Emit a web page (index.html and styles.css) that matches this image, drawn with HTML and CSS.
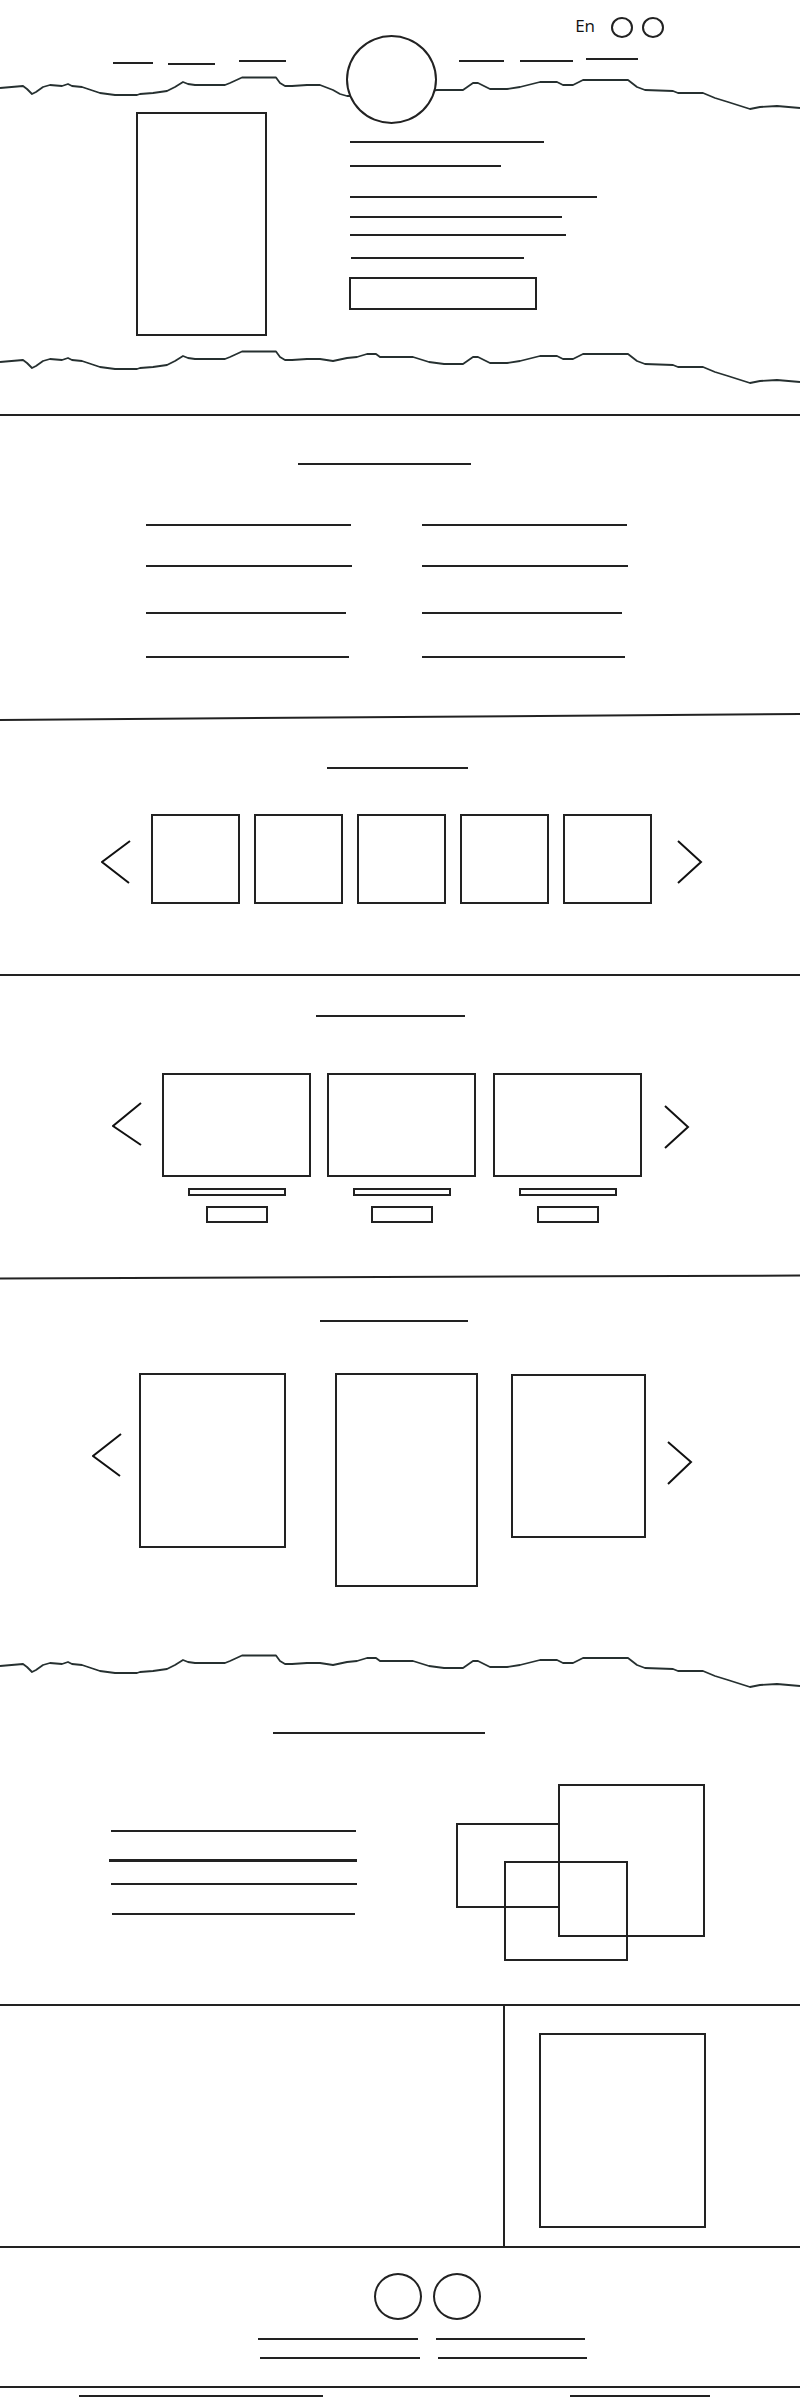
FILE: index.html
```html
<!DOCTYPE html>
<html lang="en">
<head>
  <meta charset="UTF-8" />
  <meta name="viewport" content="width=device-width, initial-scale=1.0"/>
  <title>Wireframe</title>
  <link rel="stylesheet" href="styles.css">
</head>
<body>

  <!-- HEADER + HERO -->
  <header class="head">
    <div class="topbar">
      <span class="lang">En</span>
      <span class="dot"></span>
      <span class="dot"></span>
    </div>

    <nav class="nav">
      <div class="nav-group nav-left">
        <span class="line n1"></span>
        <span class="line n2"></span>
        <span class="line n3"></span>
      </div>
      <div class="logo"></div>
      <div class="nav-group nav-right">
        <span class="line n4"></span>
        <span class="line n5"></span>
        <span class="line n6"></span>
      </div>
    </nav>

    <svg class="wave" viewBox="0 0 800 36">
      <path d="M0 12 L23 10 L27 13 L32 18 L36 16 L43 11 L50 9 L62 10 L68 8 L72 10 L82 11 L100 17 L115 19 L137 19 L140 18 L153 17 L167 15 L175 11 L183 6 L188 8 L195 9 L225 9 L230 7 L242 1.5 L276 1.5 L280 7 L285 10 L292 10 L307 9 L320 9 L333 14 L340 18 L347 20 L391 20 L437 14 L448 14 L463 14 L473 7 L478 7 L490 13 L507 13 L520 11 L540 6 L557 6 L563 9 L573 9 L583 4 L628 4 L637 11 L645 14 L673 15 L678 17 L703 17 L715 22 L728 26 L750 33 L760 31 L777 30 L800 32"/>
    </svg>

    <div class="hero">
      <div class="box hero-img"></div>
      <div class="hero-text">
        <span class="line h1"></span>
        <span class="line h2"></span>
        <span class="line h3"></span>
        <span class="line h4"></span>
        <span class="line h5"></span>
        <span class="line h6"></span>
        <div class="box hero-btn"></div>
      </div>
    </div>

    <svg class="wave wave-low" viewBox="0 0 800 36">
      <path d="M0 12 L23 10 L27 13 L32 18 L36 16 L43 11 L50 9 L62 10 L68 8 L72 10 L82 11 L100 17 L115 19 L137 19 L140 18 L153 17 L167 15 L175 11 L183 6 L188 8 L195 9 L225 9 L230 7 L242 1.5 L276 1.5 L280 7 L285 10 L292 10 L307 9 L320 9 L333 11 L347 8 L357 7 L367 4 L376 4 L380 7 L413 7 L429 12 L444 14 L463 14 L473 7 L478 7 L490 13 L507 13 L520 11 L540 6 L557 6 L563 9 L573 9 L583 4 L628 4 L637 11 L645 14 L673 15 L678 17 L703 17 L715 22 L728 26 L750 33 L760 31 L777 30 L800 32"/>
    </svg>
  </header>

  <!-- DEUX COLONNES -->
  <section class="features">
    <span class="line title t-features"></span>
    <div class="cols">
      <div class="col">
        <span class="line c1"></span>
        <span class="line c2"></span>
        <span class="line c3"></span>
        <span class="line c4"></span>
      </div>
      <div class="col">
        <span class="line c1"></span>
        <span class="line c2"></span>
        <span class="line c3"></span>
        <span class="line c4"></span>
      </div>
    </div>
  </section>

  <svg class="slant" viewBox="0 0 800 8" preserveAspectRatio="none">
    <line x1="0" y1="7" x2="800" y2="1"/>
  </svg>

  <!-- CARROUSEL PETITS -->
  <section class="strip">
    <span class="line title t-strip"></span>
    <div class="carousel small-row">
      <svg class="chev chev-left" viewBox="0 0 30 44"><polyline points="29,1 1,22 28,43"/></svg>
      <div class="thumbs">
        <div class="box thumb"></div>
        <div class="box thumb"></div>
        <div class="box thumb"></div>
        <div class="box thumb"></div>
        <div class="box thumb"></div>
      </div>
      <svg class="chev chev-right" viewBox="0 0 26 44"><polyline points="1,1 24,22 1,43"/></svg>
    </div>
  </section>

  <!-- CARTES -->
  <section class="cards">
    <span class="line title t-cards"></span>
    <div class="carousel card-row">
      <svg class="chev chev-left" viewBox="0 0 30 44"><polyline points="29,1 1,24 29,43"/></svg>
      <div class="card">
        <div class="box card-img"></div>
        <div class="box card-bar"></div>
        <div class="box card-btn"></div>
      </div>
      <div class="card">
        <div class="box card-img"></div>
        <div class="box card-bar"></div>
        <div class="box card-btn"></div>
      </div>
      <div class="card">
        <div class="box card-img"></div>
        <div class="box card-bar"></div>
        <div class="box card-btn"></div>
      </div>
      <svg class="chev chev-right" viewBox="0 0 26 44"><polyline points="1,1 24,22 1,43"/></svg>
    </div>
  </section>

  <svg class="slant slant-thin" viewBox="0 0 800 6" preserveAspectRatio="none">
    <line x1="0" y1="4.5" x2="800" y2="1.5"/>
  </svg>

  <!-- GALERIE -->
  <section class="gallery">
    <span class="line title t-gallery"></span>
    <div class="carousel tall-row">
      <svg class="chev chev-left" viewBox="0 0 30 44"><polyline points="29,1 1,23 28,43"/></svg>
      <div class="box tall tall-1"></div>
      <div class="box tall tall-2"></div>
      <div class="box tall tall-3"></div>
      <svg class="chev chev-right" viewBox="0 0 26 44"><polyline points="1,1 24,21 1,43"/></svg>
    </div>
  </section>

  <svg class="wave" viewBox="0 0 800 36">
    <path d="M0 12 L23 10 L27 13 L32 18 L36 16 L43 11 L50 9 L62 10 L68 8 L72 10 L82 11 L100 17 L115 19 L137 19 L140 18 L153 17 L167 15 L175 11 L183 6 L188 8 L195 9 L225 9 L230 7 L242 1.5 L276 1.5 L280 7 L285 10 L292 10 L307 9 L320 9 L333 11 L347 8 L357 7 L367 4 L376 4 L380 7 L413 7 L429 12 L444 14 L463 14 L473 7 L478 7 L490 13 L507 13 L520 11 L540 6 L557 6 L563 9 L573 9 L583 4 L628 4 L637 11 L645 14 L673 15 L678 17 L703 17 L715 22 L728 26 L750 33 L760 31 L777 30 L800 32"/>
  </svg>

  <!-- A PROPOS -->
  <section class="about">
    <span class="line title t-about"></span>
    <div class="about-body">
      <div class="about-text">
        <span class="line a1"></span>
        <span class="line a2"></span>
        <span class="line a3"></span>
        <span class="line a4"></span>
      </div>
      <div class="collage">
        <div class="box frame frame-big"></div>
        <div class="box frame frame-mid"></div>
        <div class="box frame frame-low"></div>
      </div>
    </div>
  </section>

  <!-- SPLIT -->
  <section class="split">
    <div class="split-left"></div>
    <div class="split-right">
      <div class="box split-img"></div>
    </div>
  </section>

  <!-- FOOTER -->
  <footer class="foot">
    <div class="socials">
      <span class="ring"></span>
      <span class="ring"></span>
    </div>
    <div class="foot-row">
      <span class="line f1"></span>
      <span class="line f2"></span>
    </div>
    <div class="foot-row foot-row-2">
      <span class="line f1"></span>
      <span class="line f2"></span>
    </div>
    <div class="legal">
      <span class="line l1"></span>
      <span class="line l2"></span>
    </div>
  </footer>

</body>
</html>
```

FILE: styles.css
```css
* {
  box-sizing: border-box;
}

body {
  margin: 0;
  width: 800px;
  background: #fff;
  color: #111;
  font-family: 'Open Sans', 'Liberation Sans', sans-serif;
}

.line {
  display: block;
  height: 2px;
  background: #222;
}

.box {
  border: 2px solid #222;
  background: transparent;
}

.title {
  margin-left: auto;
  margin-right: auto;
}

/* Haut de page */
.head {
  padding-top: 17px;
  padding-bottom: 28px;
  border-bottom: 2px solid #222;
}

.topbar {
  display: flex;
  justify-content: flex-end;
  align-items: flex-start;
  height: 18px;
  padding-right: 136px;
}

.lang {
  font-size: 17px;
  line-height: 17px;
  margin-right: 16px;
}

.dot {
  width: 22px;
  height: 21px;
  border: 2px solid #222;
  border-radius: 50%;
}

.dot + .dot {
  margin-left: 9px;
}

.nav {
  display: flex;
  align-items: flex-start;
  height: 41px;
}

.nav-group {
  display: flex;
  align-items: flex-start;
}

.nav-left {
  padding-left: 113px;
}

.n1 { width: 40px; margin-top: 27px; }
.n2 { width: 47px; margin-top: 28px; margin-left: 15px; }
.n3 { width: 47px; margin-top: 25px; margin-left: 24px; }
.n4 { width: 45px; margin-top: 25px; }
.n5 { width: 53px; margin-top: 25px; margin-left: 16px; }
.n6 { width: 52px; margin-top: 23px; margin-left: 13px; }

.logo {
  position: relative;
  z-index: 1;
  flex-shrink: 0;
  width: 91px;
  height: 89px;
  margin-left: 60px;
  border: 2px solid #222;
  border-radius: 50%;
  background: #fff;
}

.nav-right {
  margin-left: 22px;
}

.wave {
  display: block;
  width: 800px;
  height: 36px;
}

.wave path {
  fill: none;
  stroke: #263030;
  stroke-width: 1.8;
  stroke-linejoin: round;
}

.hero {
  display: flex;
  align-items: flex-start;
  padding-left: 136px;
  margin-bottom: 14px;
}

.hero-img {
  width: 131px;
  height: 224px;
}

.hero-text {
  margin-left: 83px;
  display: flex;
  flex-direction: column;
  align-items: flex-start;
}

.h1 { width: 194px; margin-top: 29px; }
.h2 { width: 151px; margin-top: 22px; }
.h3 { width: 247px; margin-top: 29px; }
.h4 { width: 212px; margin-top: 18px; }
.h5 { width: 216px; margin-top: 16px; }
.h6 { width: 173px; margin-top: 21px; margin-left: 1px; }

.hero-btn {
  width: 188px;
  height: 33px;
  margin-top: 18px;
  margin-left: -1px;
}

/* Deux colonnes */
.features {
  padding-top: 47px;
  padding-bottom: 55px;
}

.t-features {
  width: 173px;
  margin-left: 298px;
}

.cols {
  display: flex;
  gap: 70px;
  padding-left: 146px;
  margin-top: 59px;
}

.col {
  width: 206px;
}

.c1 { width: 205px; }
.c2 { width: 206px; margin-top: 39px; }
.c3 { width: 200px; margin-top: 45px; }
.c4 { width: 203px; margin-top: 42px; }

.slant {
  display: block;
  width: 800px;
  height: 8px;
}

.slant line {
  stroke: #222;
  stroke-width: 2;
}

.slant-thin {
  height: 6px;
}

/* Carrousels */
.carousel {
  display: flex;
  align-items: flex-start;
}

.chev {
  flex-shrink: 0;
  width: 30px;
  height: 44px;
}

.chev-right {
  width: 26px;
}

.chev polyline {
  fill: none;
  stroke: #111;
  stroke-width: 2;
}

.strip {
  padding-top: 46px;
  padding-bottom: 70px;
  border-bottom: 2px solid #222;
}

.t-strip {
  width: 141px;
  margin-left: 327px;
}

.small-row {
  margin-top: 45px;
  padding-left: 101px;
}

.small-row .chev {
  margin-top: 26px;
}

.thumbs {
  display: flex;
  gap: 14px;
  margin-left: 20px;
}

.thumb {
  width: 89px;
  height: 90px;
}

.small-row .chev-right {
  margin-left: 25px;
}

/* Cartes */
.cards {
  padding-top: 39px;
  padding-bottom: 51px;
}

.t-cards {
  width: 149px;
  margin-left: 316px;
}

.card-row {
  margin-top: 56px;
  padding-left: 112px;
}

.card-row .chev-left {
  margin-top: 29px;
  margin-right: 20px;
}

.card-row .chev-right {
  margin-top: 32px;
  margin-left: 22px;
}

.card {
  display: flex;
  flex-direction: column;
  align-items: center;
}

.card + .card {
  margin-left: 16px;
}

.card:nth-of-type(3) {
  margin-left: 17px;
}

.card-img {
  width: 149px;
  height: 104px;
}

.card-bar {
  width: 98px;
  height: 8px;
  margin-top: 11px;
}

.card-btn {
  width: 62px;
  height: 17px;
  margin-top: 10px;
}

/* Galerie */
.gallery {
  padding-top: 40px;
  padding-bottom: 67px;
}

.t-gallery {
  width: 148px;
  margin-left: 320px;
}

.tall-row {
  margin-top: 51px;
  padding-left: 92px;
}

.tall-row .chev-left {
  margin-top: 60px;
  margin-right: 17px;
}

.tall-row .chev-right {
  margin-top: 68px;
  margin-left: 21px;
}

.tall-1 { width: 147px; height: 175px; }
.tall-2 { width: 143px; height: 214px; margin-left: 49px; }
.tall-3 { width: 135px; height: 164px; margin-left: 33px; margin-top: 1px; }

/* A propos */
.about {
  padding-top: 42px;
  padding-bottom: 43px;
  border-bottom: 2px solid #222;
}

.t-about {
  width: 212px;
  margin-left: 273px;
}

.about-body {
  display: flex;
  align-items: flex-start;
  margin-top: 50px;
  padding-left: 109px;
}

.about-text {
  width: 248px;
  padding-top: 46px;
}

.a1 { width: 245px; margin-left: 2px; }
.a2 { width: 248px; height: 3px; margin-top: 27px; }
.a3 { width: 246px; margin-left: 2px; margin-top: 21px; }
.a4 { width: 243px; margin-left: 3px; margin-top: 28px; }

.collage {
  position: relative;
  width: 249px;
  height: 177px;
  margin-left: 99px;
}

.frame {
  position: absolute;
}

.frame-big { left: 102px; top: 0; width: 147px; height: 153px; }
.frame-mid { left: 0; top: 39px; width: 104px; height: 85px; }
.frame-low { left: 48px; top: 77px; width: 124px; height: 100px; }

/* Bloc partagé */
.split {
  display: flex;
  height: 242px;
  border-bottom: 2px solid #222;
}

.split-left {
  width: 505px;
  border-right: 2px solid #222;
}

.split-right {
  padding-top: 27px;
  padding-left: 34px;
}

.split-img {
  width: 167px;
  height: 195px;
}

/* Pied de page */
.foot {
  padding-top: 25px;
}

.socials {
  display: flex;
  gap: 11px;
  padding-left: 374px;
}

.ring {
  width: 48px;
  height: 47px;
  border: 2px solid #222;
  border-radius: 50%;
}

.foot-row {
  display: flex;
  gap: 18px;
  padding-left: 258px;
  margin-top: 18px;
}

.foot-row-2 {
  padding-left: 260px;
  margin-top: 17px;
}

.f1 { width: 160px; }
.f2 { width: 149px; }

.legal {
  display: flex;
  margin-top: 27px;
  padding-top: 7px;
  padding-left: 79px;
  border-top: 2px solid #222;
}

.l1 { width: 244px; }
.l2 { width: 140px; margin-left: 247px; }
```
